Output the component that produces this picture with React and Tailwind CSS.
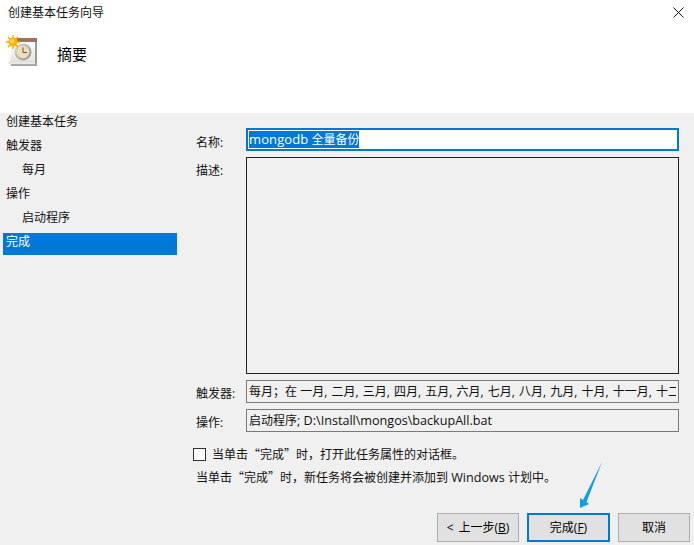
import React from "react";

const font = { fontFamily: '"Open Sans","Noto Sans CJK SC",sans-serif' };

function TaskIcon() {
  return (
    <svg width="32" height="34" viewBox="0 0 32 34" className="block">
      <defs>
        <linearGradient id="pg" x1="0" y1="0" x2="0" y2="1">
          <stop offset="0" stopColor="#ffffff" />
          <stop offset="1" stopColor="#e4e4de" />
        </linearGradient>
        <linearGradient id="cl" x1="0" y1="0" x2="1" y2="1">
          <stop offset="0" stopColor="#dcdcdc" />
          <stop offset="1" stopColor="#8e8e8e" />
        </linearGradient>
      </defs>
      <rect x="8" y="3" width="23" height="26" fill="#9a9a96" />
      <rect x="5" y="28" width="26" height="3" fill="#a5a5a2" />
      <path d="M4 27 L6 6 H29 V27 Z" fill="url(#pg)" />
      <rect x="3" y="27" width="26" height="2" fill="#f4f4f0" stroke="#c8c8c8" strokeWidth="0.5" />
      <rect x="9" y="3" width="22" height="4" fill="#9b7360" />
      <circle cx="17" cy="17" r="8.5" fill="url(#cl)" />
      <circle cx="17" cy="17" r="6.3" fill="#f0dfb4" />
      <path d="M17 12.5 V17.5 H21" fill="none" stroke="#555" strokeWidth="1" />
      <g stroke="#f7a400" strokeWidth="1.3">
        <path d="M7 0 V14 M0 7 H14 M2 2 L12 12 M12 2 L2 12" />
      </g>
      <circle cx="7" cy="7" r="4.6" fill="#ffb400" />
      <circle cx="6.2" cy="6.2" r="2.2" fill="#ffd659" />
    </svg>
  );
}

function Btn({ children, primary }) {
  return (
    <div
      className={
        primary
          ? "h-[29px] w-[83px] border-2 border-[#0078d7] bg-[#e1e1e1] flex items-center justify-center text-xs text-black"
          : "h-[29px] border border-[#adadad] bg-[#e1e1e1] flex items-center justify-center text-xs text-black"
      }
    >
      {children}
    </div>
  );
}

function Row({ label, className, children, labelPad }) {
  return (
    <div className={"flex " + className}>
      <div className={"w-[50px] shrink-0 text-xs leading-[18px] text-[#111] " + (labelPad || "pt-[5px]")}>{label}</div>
      {children}
    </div>
  );
}

function ReadBox({ children }) {
  return (
    <div className="h-[23px] w-[433px] border border-[#7a7a7a] overflow-hidden whitespace-nowrap pl-[2px] pr-[2px] text-xs leading-[22px] text-[#111]">
      <div className="overflow-hidden h-[21px]">{children}</div>
    </div>
  );
}

function Q({ children }) {
  return <span className="[font-family:'Noto_Sans_CJK_SC',sans-serif]">{children}</span>;
}

function Finish() {
  return (
    <>
      当单击<Q>“</Q>完成<Q>”</Q>时，
    </>
  );
}

const months = ["一月", "二月", "三月", "四月", "五月", "六月", "七月", "八月", "九月", "十月", "十一月", "十二月"];

export default function App() {
  const side = [
    ["创建基本任务", false],
    ["触发器", false],
    ["每月", true],
    ["操作", false],
    ["启动程序", true],
  ];
  return (
    <div className="relative w-[694px] h-[545px] overflow-hidden bg-[#f0f0f0] text-black" style={font}>
      <div className="h-[113px] bg-white flex flex-col">
        <div className="flex justify-between h-[25px] pl-[8px] pr-[8px] items-center">
          <span className="text-xs leading-[25px] text-[#111]">创建基本任务向导</span>
          <svg width="11" height="11" viewBox="0 0 11 11" className="mr-[2px]">
            <path d="M0.5 0.5 L10.5 10.5 M10.5 0.5 L0.5 10.5" stroke="#111" strokeWidth="1" fill="none" />
          </svg>
        </div>
        <div className="flex items-start pl-[6px] pt-[10px]">
          <TaskIcon />
          <span className="ml-[19px] mt-[9px] text-[15px] leading-[20px]">摘要</span>
        </div>
      </div>
      <div className="flex h-[432px]">
        <div className="w-[193px] shrink-0 pl-[3px]">
          {side.map(([t, indent]) => (
            <div
              key={t}
              className={
                (indent ? "pl-[19px] " : "pl-[3px] ") +
                "h-[22px] mb-[2px] w-[174px] text-xs leading-[18px] text-[#111]"
              }
            >
              {t}
            </div>
          ))}
          <div className="h-[22px] w-[174px] bg-[#0078d7] pl-[3px] text-xs leading-[18px] text-white">完成</div>
        </div>
        <div className="flex-1 pt-[15px] pl-[3px]">
          <Row label="名称:" labelPad="pt-[6px]" className="h-[23px] mb-[6px]">
            <div className="flex items-center h-[23px] w-[433px] border-2 border-[#0078d7] bg-white pl-[1px]">
              <div className="h-[17px] bg-[#0078d7] text-white text-xs leading-[17px] whitespace-nowrap">
                <span className="text-[13px] tracking-[0.1px]">mongodb</span> 全量备份
              </div>
            </div>
          </Row>
          <Row label="描述:" className="h-[217px] mb-[6px]">
            <div className="h-[217px] w-[433px] border border-[#222] bg-[#f0f0f0]" />
          </Row>
          <Row label="触发器:" className="h-[23px] mb-[6px]">
            <ReadBox>
              每月；在{" "}
              {months.map((m, i) => (
                <React.Fragment key={m}>
                  {m}
                  {i < months.length - 1 ? <span className="mr-[1px]">, </span> : null}
                </React.Fragment>
              ))}
            </ReadBox>
          </Row>
          <Row label="操作:" className="h-[23px]">
            <ReadBox>
              启动程序<span className="text-[12.6px]">; D:\Install\mongos\backupAll.bat</span>
            </ReadBox>
          </Row>
          <div className="flex items-center mt-[16px] h-[13px] -ml-[3px]">
            <div className="w-[13px] h-[13px] border border-[#333] bg-white shrink-0" />
            <span className="ml-[6px] text-xs leading-[18px] text-[#111]">
              <Finish />打开此任务属性的对话框。
            </span>
          </div>
          <div className="mt-[7px] text-xs leading-[18px] text-[#111]">
            <Finish />新任务将会被创建并添加到 <span className="text-[12.6px]">Windows</span> 计划中。
          </div>
          <div className="flex mt-[26px] pl-[241px]">
            <div className="w-[82px]"><Btn>&lt;<span className="ml-[5px]">上一步(<u>B</u>)</span></Btn></div>
            <div className="ml-[8px]"><Btn primary>完成(<u>F</u>)</Btn></div>
            <div className="w-[72px] ml-[8px]"><Btn>取消</Btn></div>
          </div>
        </div>
      </div>
      <svg width="40" height="60" viewBox="0 0 40 60" className="absolute left-[570px] top-[455px]">
        <path d="M32 7 L16.5 47 L19 49 L10 53 L10 43 L13 45 Z" fill="#0f9fe8" />
      </svg>
    </div>
  );
}
